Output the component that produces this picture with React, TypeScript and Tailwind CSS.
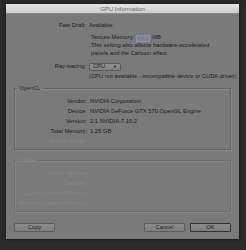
import React from 'react'

const font = { fontFamily: '"Liberation Sans", Arial, sans-serif' }

function Row({ label, value, dim }: { label: string; value?: string; dim?: boolean }) {
  return (
    <div className={`grid grid-cols-[72px_1fr] gap-x-[3px] h-[10px] items-center ${dim ? 'text-[#888]' : 'text-[#1c1c1c]'}`}>
      <span className="text-right whitespace-nowrap">{label}</span>
      <span className="whitespace-nowrap">{value}</span>
    </div>
  )
}

function Btn({ label, primary }: { label: string; primary?: boolean }) {
  return (
    <div
      className={`w-[41px] h-[9px] flex items-center justify-center text-[#1c1c1c] bg-gradient-to-b from-[#8c8c8c] to-[#7e7e7e] rounded-[1px] ${
        primary ? 'border border-[#333]' : 'border border-[#5c5c5c]'
      }`}
    >
      {label}
    </div>
  )
}

export default function App() {
  return (
    <div className="w-[246px] h-[250px] bg-[#2a2a2a] pt-[4px] pl-[6px] text-[5.8px] leading-none" style={font}>
      <div className="w-[233px] h-[235px] bg-[#7a7a7a] flex flex-col shadow-[0_0_3px_rgba(0,0,0,0.6)]">
        {/* Title bar */}
        <div className="h-[10px] bg-gradient-to-b from-[#e4e4e4] to-[#cdcdcd] border-b border-[#8a8a8a] flex items-center justify-center text-[#6a6a6a] text-[6px]">
          GPU Information
        </div>

        <div className="flex flex-col pt-[8px] px-[8px]">
          {/* Fast Draft */}
          <div className="grid grid-cols-[72px_1fr] gap-x-[3px] h-[8px] items-center text-[#1c1c1c]">
            <span className="text-right">Fast Draft:</span>
            <span>Available</span>
          </div>

          {/* Texture Memory */}
          <div className="pl-[77px] mt-[4px] text-[#1c1c1c] whitespace-nowrap">
            <div className="flex items-center h-[8px] gap-[2px]">
              <span>Texture Memory:</span>
              <span className="w-[14px] h-[7px] border border-[#8f97a6] bg-[#80838a] text-[#6a8de0] flex items-center justify-center">512</span>
              <span>MB</span>
            </div>
            <div className="leading-[7.5px]">
              This setting also affects hardware-accelerated
              <br />
              panels and the Cartoon effect.
            </div>
          </div>

          {/* Ray-tracing */}
          <div className="grid grid-cols-[72px_1fr] gap-x-[3px] mt-[6px] h-[8px] items-center text-[#1c1c1c]">
            <span className="text-right">Ray-tracing:</span>
            <div className="w-[32px] h-[8px] border border-[#5a5a5a] bg-gradient-to-b from-[#909090] to-[#808080] flex items-center justify-between px-[3px] rounded-[1px]">
              <span>CPU</span>
              <span className="text-[4px]">▼</span>
            </div>
          </div>
          <div className="pl-[75px] mt-[2px] h-[8px] flex items-center text-[#1c1c1c] whitespace-nowrap">
            (CPU not available - incompatible device or CUDA driver)
          </div>

          {/* OpenCL */}
          <fieldset className="mt-[5px] border border-[#666] shadow-[inset_1px_1px_0_#888,1px_1px_0_#888] h-[64px] px-0 pt-[5px]">
            <legend className="ml-[2px] px-[2px] text-[#2a2a2a]">OpenCL</legend>
            <Row label="Vendor:" value="NVIDIA Corporation" />
            <Row label="Device:" value="NVIDIA GeForce GTX 570 OpenGL Engine" />
            <Row label="Version:" value="2.1 NVIDIA-7.10.2" />
            <Row label="Total Memory:" value="1.25 GB" />
            <Row label="Shader Model:" dim />
          </fieldset>

          {/* CUDA */}
          <fieldset className="mt-[8px] border border-[#6e6e6e] shadow-[inset_1px_1px_0_#848484,1px_1px_0_#848484] h-[54px] px-0 pt-[5px]">
            <legend className="ml-[2px] px-[2px] text-[#888]">CUDA</legend>
            <Row label="Driver Version:" value="--" dim />
            <Row label="Devices:" value="--" dim />
            <Row label="Current Usable Memory:" value="--" dim />
            <Row label="Maximum Usable Memory:" value="--" dim />
          </fieldset>

          {/* Buttons */}
          <div className="flex items-center mt-[11px]">
            <Btn label="Copy" />
            <div className="flex-1" />
            <Btn label="Cancel" />
            <div className="w-[5px]" />
            <Btn label="OK" primary />
          </div>
        </div>
      </div>
    </div>
  )
}
